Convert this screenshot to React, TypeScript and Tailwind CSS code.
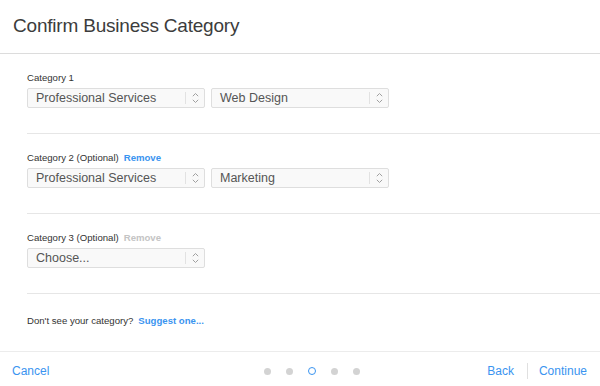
const Chevrons = () => (
  <svg width="7" height="12" viewBox="0 0 7 12" fill="none" stroke="#a0a0a0" strokeWidth="1">
    <path d="M0.8 4.2 L3.5 1.5 L6.2 4.2" />
    <path d="M0.8 7.8 L3.5 10.5 L6.2 7.8" />
  </svg>
);

const Select = ({ value }: { value: string }) => (
  <div className="flex items-center w-[178px] h-[20px] bg-[#f9f9f9] border border-[#dedede] rounded-[2px]">
    <span className="flex-1 pl-[8px] text-[12.5px] leading-none text-[#555]">{value}</span>
    <div className="w-px h-[12px] bg-[#e2e2e2]" />
    <div className="w-[18px] flex justify-center">
      <Chevrons />
    </div>
  </div>
);

type Row = {
  label: string;
  remove?: "on" | "off";
  values: string[];
};

const rows: Row[] = [
  { label: "Category 1", values: ["Professional Services", "Web Design"] },
  { label: "Category 2 (Optional)", remove: "on", values: ["Professional Services", "Marketing"] },
  { label: "Category 3 (Optional)", remove: "off", values: ["Choose..."] },
];

export default function App() {
  return (
    <div
      className="w-[600px] h-[386px] flex flex-col bg-white text-[#333]"
      style={{ fontFamily: '"Liberation Sans", Arial, sans-serif' }}
    >
      <div className="h-[54px] border-b border-[#dcdcdc] flex items-center pl-[13px] pb-[1px]">
        <h1 className="text-[19px] text-[#3c3c3c] tracking-[-0.2px]">Confirm Business Category</h1>
      </div>

      <div className="pl-[27px]">
        {rows.map((row) => (
          <div key={row.label} className="pt-[18px] pb-[25px] border-b border-[#e6e6e6]">
            <div className="h-[12px] flex items-center gap-[5px] text-[9.6px]">
              <span className="text-[#333]">{row.label}</span>
              {row.remove && (
                <span className={row.remove === "on" ? "font-bold text-[#3a94f0]" : "font-bold text-[#c4c4c4]"}>
                  Remove
                </span>
              )}
            </div>
            <div className="mt-[4px] flex gap-[6px]">
              {row.values.map((v, i) => (
                <Select key={i} value={v} />
              ))}
            </div>
          </div>
        ))}
        <div className="pt-[21px] h-[12px] flex items-center gap-[5px] text-[9.6px] box-content">
          <span className="text-[#333]">Don't see your category?</span>
          <span className="font-bold text-[#3a94f0]">Suggest one...</span>
        </div>
      </div>

      <div className="mt-auto h-[35px] border-t border-[#ececec] flex items-center pt-[4px] text-[12px] text-[#3a94f0]">
        <div className="w-[264px] pl-[12px]">Cancel</div>
        <div className="flex items-center gap-[15px]">
          <span className="w-[7px] h-[7px] rounded-full bg-[#d3d3d3]" />
          <span className="w-[7px] h-[7px] rounded-full bg-[#d3d3d3]" />
          <span className="w-[8px] h-[8px] rounded-full border border-[#3a94f0]" />
          <span className="w-[7px] h-[7px] rounded-full bg-[#d3d3d3]" />
          <span className="w-[7px] h-[7px] rounded-full bg-[#d3d3d3]" />
        </div>
        <div className="ml-auto flex items-center pr-[13px]">
          <span>Back</span>
          <span className="ml-[13px] w-px h-[16px] bg-[#e0e0e0]" />
          <span className="ml-[11px]">Continue</span>
        </div>
      </div>
    </div>
  );
}
